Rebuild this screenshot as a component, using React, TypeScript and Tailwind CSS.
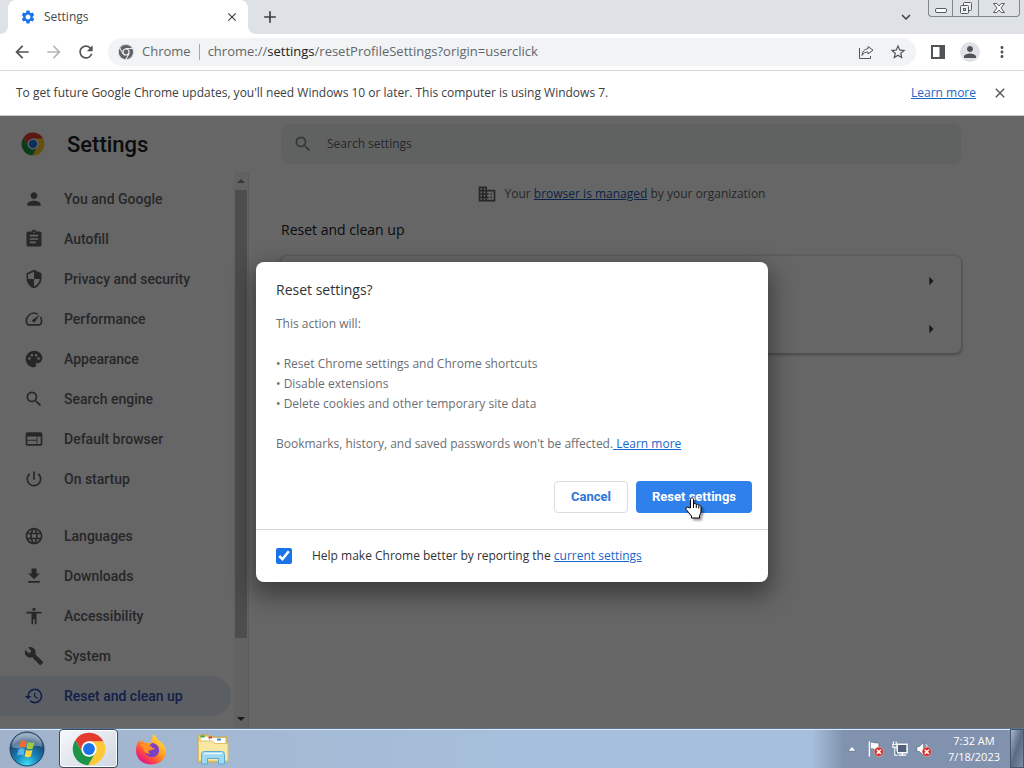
import * as React from "react";
import type { IconType } from "react-icons";
import {
  MdAccessibility,
  MdAdd,
  MdArrowBack,
  MdArrowForward,
  MdArrowRight,
  MdAssignment,
  MdBuild,
  MdClose,
  MdDomain,
  MdExpandMore,
  MdHistory,
  MdLanguage,
  MdMoreVert,
  MdPalette,
  MdPerson,
  MdPowerSettingsNew,
  MdRefresh,
  MdSearch,
  MdSecurity,
  MdSettings,
  MdSpeed,
  MdStarBorder,
  MdWeb,
} from "react-icons/md";
import { clsx } from "clsx";

type IconProps = { className?: string };

type NavItem = {
  label: string;
  icon: IconType | React.ComponentType<IconProps>;
  active?: boolean;
};

function DownloadIcon({ className }: Readonly<IconProps>) {
  return (
    <svg viewBox="0 0 24 24" fill="currentColor" className={className} aria-hidden="true">
      <path d="M19 9h-4V3H9v6H5l7 7 7-7zM5 18v2h14v-2H5z" />
    </svg>
  );
}

const primaryNav: NavItem[] = [
  { label: "You and Google", icon: MdPerson },
  { label: "Autofill", icon: MdAssignment },
  { label: "Privacy and security", icon: MdSecurity },
  { label: "Performance", icon: MdSpeed },
  { label: "Appearance", icon: MdPalette },
  { label: "Search engine", icon: MdSearch },
  { label: "Default browser", icon: MdWeb },
  { label: "On startup", icon: MdPowerSettingsNew },
];

const advancedNav: NavItem[] = [
  { label: "Languages", icon: MdLanguage },
  { label: "Downloads", icon: DownloadIcon },
  { label: "Accessibility", icon: MdAccessibility },
  { label: "System", icon: MdBuild },
  { label: "Reset and clean up", icon: MdHistory, active: true },
];

function ChromeLogo({ className, mono = false }: Readonly<IconProps & { mono?: boolean }>) {
  const stroke = mono ? { stroke: "#f1f3f4", strokeWidth: 2.5 } : {};
  return (
    <svg viewBox="1 1 46 46" className={className} aria-hidden="true">
      <path d="M5.54 12.03A22 22 0 0 1 43.6 14H24v10l-8.66 5z" fill={mono ? "#5f6368" : "#e33b2e"} {...stroke} />
      <path d="M43.6 14A22 22 0 0 1 22.86 45.97L32.66 29 24 24V14z" fill={mono ? "#5f6368" : "#fcc934"} {...stroke} />
      <path d="M22.86 45.97A22 22 0 0 1 5.54 12.03L15.34 29 24 24l8.66 5z" fill={mono ? "#5f6368" : "#1e9446"} {...stroke} />
      <circle cx="24" cy="24" r="10.4" fill={mono ? "#f1f3f4" : "#fff"} />
      <circle cx="24" cy="24" r={mono ? 7 : 8} fill={mono ? "#5f6368" : "#1a73e8"} />
    </svg>
  );
}

function WindowControls() {
  return (
    <div className="flex h-[17px] rounded-b border border-t-0 border-[#7d858f] text-[#555c66]">
      <button type="button" aria-label="Minimize" className="flex w-6 items-center justify-center border-r border-[#7d858f]">
        <svg viewBox="0 0 14 14" className="size-3.5" fill="#fff" stroke="currentColor">
          <rect x="1.5" y="7.5" width="11" height="4" rx="1.5" />
        </svg>
      </button>
      <button type="button" aria-label="Restore" className="flex w-[26px] items-center justify-center border-r border-[#7d858f]">
        <svg viewBox="0 0 14 14" className="size-3.5" fill="#eef0f3" stroke="currentColor">
          <rect x="4.5" y="1.5" width="8" height="8" rx="1" />
          <rect x="1.5" y="4.5" width="8" height="8" rx="1" />
          <rect x="4.5" y="7.5" width="2" height="2" />
        </svg>
      </button>
      <button type="button" aria-label="Close" className="flex w-10 items-center justify-center">
        <svg viewBox="0 0 14 12" className="h-3 w-3.5" fill="#fff" stroke="currentColor" strokeLinejoin="round">
          <path d="M1.5 1.5h3.3L7 4l2.2-2.5h3.3L9 6l3.5 4.5H9.2L7 8l-2.2 2.5H1.5L5 6z" />
        </svg>
      </button>
    </div>
  );
}

function TabStrip() {
  return (
    <div className="flex h-[34px] shrink-0 bg-white">
      <div className="w-2 rounded-br-lg bg-[#dee1e6]" />
      <div className="w-60 bg-[#dee1e6]">
        <div className="flex h-full items-center rounded-t-lg bg-white pr-2 pl-3">
          <MdSettings className="size-4 text-[#1a73e8]" />
          <span className="ml-2 flex-1 text-xs text-[#45494d]">Settings</span>
          <button type="button" aria-label="Close tab" className="flex size-4 items-center justify-center">
            <MdClose className="size-3.5 text-[#3c4043]" />
          </button>
        </div>
      </div>
      <div className="flex flex-1 items-start rounded-bl-lg bg-[#dee1e6] pr-1">
        <button type="button" aria-label="New tab" className="ml-3 flex h-[34px] w-5 items-center justify-center">
          <MdAdd className="size-5 text-[#3c4043]" />
        </button>
        <button type="button" aria-label="Search tabs" className="mr-3 ml-auto flex h-[34px] w-5 items-center justify-center">
          <MdExpandMore className="size-[18px] text-[#3c4043]" />
        </button>
        <WindowControls />
      </div>
    </div>
  );
}

function ToolbarButton({ label, children }: Readonly<{ label: string; children: React.ReactNode }>) {
  return (
    <button type="button" aria-label={label} className="flex h-7 w-8 shrink-0 items-center justify-center text-[#505357]">
      {children}
    </button>
  );
}

function Toolbar() {
  return (
    <div className="flex h-[37px] shrink-0 items-center border-b border-[#d5d7da] bg-white px-1.5">
      <ToolbarButton label="Back">
        <MdArrowBack className="size-5" />
      </ToolbarButton>
      <ToolbarButton label="Forward">
        <MdArrowForward className="size-5 text-[#b5b7ba]" />
      </ToolbarButton>
      <ToolbarButton label="Reload">
        <MdRefresh className="size-5" />
      </ToolbarButton>
      <div className="mx-1.5 flex h-7 flex-1 items-center rounded-full bg-[#f1f3f4] pl-2.5 text-[13px] text-[#63676b]">
        <ChromeLogo mono className="size-4" />
        <span className="ml-2">Chrome</span>
        <span className="mx-2 h-4 w-px bg-[#a5a8ab]" />
        <span className="flex-1">
          chrome://<span className="text-[#202124]">settings</span>/resetProfileSettings?origin=userclick
        </span>
        <ToolbarButton label="Share this page">
          <svg viewBox="0 0 16 16" className="size-4" fill="none" stroke="currentColor" strokeLinejoin="round">
            <path d="M1.500 4v10.500h11V12" />
            <path d="M10 2.500l5 3.700-5 3.800V8C7.200 8 5.200 9 4 11.500 4.200 7.500 6.500 5 10 4.700z" />
          </svg>
        </ToolbarButton>
        <ToolbarButton label="Bookmark this tab">
          <MdStarBorder className="size-[18px]" />
        </ToolbarButton>
        <span className="w-0.5" />
      </div>
      <ToolbarButton label="Side panel">
        <svg viewBox="0 0 14 14" className="size-3.5">
          <rect x="1" y="1" width="12" height="12" fill="none" stroke="currentColor" strokeWidth="2" />
          <rect x="8.500" y="1" width="5" height="12" fill="currentColor" />
        </svg>
      </ToolbarButton>
      <ToolbarButton label="Profile">
        <span className="flex size-5 items-center justify-center rounded-full bg-[#dee1e6]">
          <MdPerson className="size-[18px]" />
        </span>
      </ToolbarButton>
      <ToolbarButton label="Menu">
        <MdMoreVert className="size-[18px]" />
      </ToolbarButton>
    </div>
  );
}

function InfoBar() {
  return (
    <div className="flex h-[45px] shrink-0 items-center border-b border-[#c4c6c9] bg-white px-4 text-xs text-[#3c4043]">
      <p className="flex-1">
        To get future Google Chrome updates, you'll need Windows 10 or later. This computer is using Windows 7.
      </p>
      <a href="#update" className="text-[#1a66c9] underline">
        Learn more
      </a>
      <button type="button" aria-label="Dismiss" className="ml-4 flex size-4 items-center justify-center">
        <MdClose className="size-4 shrink-0 text-[#505357]" />
      </button>
    </div>
  );
}

function NavLink({ label, icon: Icon, active = false }: Readonly<NavItem>) {
  return (
    <a
      href="#nav"
      aria-current={active ? "page" : undefined}
      className={clsx(
        "mr-[3px] flex h-10 items-center rounded-r-full pl-6 font-[Roboto,sans-serif] text-sm font-medium",
        active ? "bg-[#e4ebf8] text-[#3050b8]" : "text-[#5f6368]",
      )}
    >
      <Icon className="mr-5 size-5" />
      {label}
    </a>
  );
}

function Sidebar() {
  return (
    <aside className="flex w-[249px] shrink-0 flex-col">
      <div className="flex h-14 shrink-0 items-center pl-[21px]">
        <ChromeLogo className="size-6" />
        <h1 className="ml-[22px] font-[Roboto,sans-serif] text-[22px] font-medium text-[#202124]">Settings</h1>
      </div>
      <div className="flex min-h-0 flex-1 border-r border-[#e8e8e8]">
        <nav className="min-w-0 flex-1 overflow-hidden pt-[7px]">
          {primaryNav.map((item) => (
            <NavLink key={item.label} {...item} />
          ))}
          <div className="h-[17px]" />
          {advancedNav.map((item) => (
            <NavLink key={item.label} {...item} />
          ))}
        </nav>
        {/* Scrollbar */}
        <div className="flex w-3.5 flex-col items-center bg-[#f5f5f5]">
          <svg viewBox="0 0 8 4" className="my-[7px] h-1 w-2" fill="#8a8a8a">
            <path d="M4 0l4 4H0z" />
          </svg>
          <div className="w-3 flex-[449] bg-[#c1c1c1]" />
          <div className="flex-[72]" />
          <svg viewBox="0 0 8 4" className="my-[7px] h-1 w-2" fill="#404040">
            <path d="M0 0h8L4 4z" />
          </svg>
        </div>
      </div>
    </aside>
  );
}

function SettingsPage() {
  return (
    <main className="flex min-w-0 flex-1 flex-col pr-[63px] pl-8">
      <label className="mt-2 flex h-10 items-center rounded-lg bg-[#f1f4f3] pl-3">
        <MdSearch className="size-5 text-[#7f868b]" />
        <input
          type="search"
          placeholder="Search settings"
          className="ml-3.5 flex-1 bg-transparent text-xs outline-none placeholder:text-[#5f6368]"
        />
      </label>
      <div className="mt-5 flex h-5 items-center justify-center text-xs text-[#5f6368]">
        <MdDomain className="mr-2 size-5" />
        <p>
          Your{" "}
          <a href="#managed" className="text-[#1a5bb8] underline">
            browser is managed
          </a>{" "}
          by your organization
        </p>
      </div>
      <h2 className="mt-3 text-sm leading-7 text-[#202124]">Reset and clean up</h2>
      <div className="mt-3 rounded-md shadow-[0_1px_3px_1px_#3c404366]">
        <button
          type="button"
          aria-label="Restore settings to their original defaults"
          className="flex h-[49px] w-full items-center justify-end pr-5"
        >
          <MdArrowRight className="size-5 text-[#3c4043]" />
        </button>
        <button type="button" aria-label="Clean up computer" className="flex h-12 w-full items-center justify-end pr-5">
          <MdArrowRight className="size-5 text-[#3c4043]" />
        </button>
      </div>
    </main>
  );
}

function HandCursor({ className }: Readonly<IconProps>) {
  return (
    <svg viewBox="0 0 17 22" className={className} aria-hidden="true">
      <path
        d="M5.500 11V2.500C5.500.200 8.500.200 8.500 2.500V7c.8-.8 2.400-.6 2.700.6.900-.7 2.300-.300 2.500.900 1-.5 2.300.100 2.300 1.500v4c0 2-1 3-1.500 4.500V21h-8v-2C5 17 3 15 1.200 12.500.2 11 1.800 9.500 3.200 10.400z"
        fill="#fff"
        stroke="#000"
        strokeLinejoin="round"
      />
      <path d="M8.500 7v4M11.300 8v3M13.800 9v2.500" stroke="#000" fill="none" />
    </svg>
  );
}

function ResetDialog() {
  return (
    <div
      role="dialog"
      aria-modal="true"
      aria-labelledby="reset-title"
      className="w-lg rounded-lg bg-white shadow-[0_10px_24px_4px_#00000066]"
    >
      <div className="px-5 pt-4 text-xs leading-5 text-[#6b6e72]">
        <h2 id="reset-title" className="text-sm leading-6 text-[#303236]">
          Reset settings?
        </h2>
        <p className="mt-3">This action will:</p>
        <ul className="my-5">
          <li>• Reset Chrome settings and Chrome shortcuts</li>
          <li>• Disable extensions</li>
          <li>• Delete cookies and other temporary site data</li>
        </ul>
        <p>
          Bookmarks, history, and saved passwords won't be affected.
          <a href="#learn" className="text-[#1a66c9] underline">
            {" "}
            Learn more
          </a>
        </p>
      </div>
      <div className="flex justify-end gap-2 px-4 pt-[27px] pb-4 font-[Roboto,sans-serif] text-[13px] font-bold">
        <button type="button" className="h-8 rounded border border-[#dadce0] px-4 text-[#2b76d9]">
          Cancel
        </button>
        <button type="button" className="relative h-8 rounded bg-[#2f80ea] px-4 text-white">
          Reset settings
          <HandCursor className="absolute top-4 left-[49px] h-[22px] w-[17px] drop-shadow-[2px_2px_1px_#00000066]" />
        </button>
      </div>
      <div className="flex h-[53px] items-center border-t border-[#d5d5d5] px-5 text-xs text-[#303236]">
        <input id="send-report" type="checkbox" defaultChecked className="size-4 accent-[#1a73e8]" />
        <label htmlFor="send-report" className="ml-5">
          Help make Chrome better by reporting the{" "}
          <a href="#current" className="text-[#1a66c9] underline">
            current settings
          </a>
        </label>
      </div>
    </div>
  );
}

function StartOrb() {
  return (
    <svg viewBox="0 0 36 36" className="size-9" aria-hidden="true">
      <defs>
        <radialGradient id="orb" cx="50%" cy="95%" r="85%">
          <stop offset="0" stopColor="#3fe0f5" />
          <stop offset="0.4" stopColor="#1684b8" />
          <stop offset="0.8" stopColor="#1c4a78" />
          <stop offset="1" stopColor="#6f8ba8" />
        </radialGradient>
      </defs>
      <circle cx="18" cy="18" r="17" fill="url(#orb)" stroke="#20405f" />
      <path d="M3 16a15 14 0 0 1 30 0c-9-4-20 4-30 0z" fill="#fff" opacity="0.3" />
      <path d="M11.500 10.500c2-1.400 4.300-1.300 6.200-.2l-1.500 6.500c-2-1.200-4.200-1.200-6.300.1z" fill="#ee6a2c" />
      <path d="M18.900 10.900c2 1.200 4.300 1.200 6.500 0l-1.600 6.600c-2 1.200-4.300 1.100-6.400-.1z" fill="#9dcc3f" />
      <path d="M9.600 18.200c2-1.300 4.300-1.300 6.300-.1l-1.600 6.600c-2-1.200-4.200-1.200-6.300.1z" fill="#5bb3ec" />
      <path d="M17.100 18.700c2 1.200 4.300 1.200 6.400 0l-1.600 6.600c-2 1.200-4.200 1.100-6.300-.1z" fill="#fcd440" />
    </svg>
  );
}

function FirefoxLogo() {
  return (
    <svg viewBox="0 0 32 32" className="size-8" aria-hidden="true">
      <defs>
        <linearGradient id="fox" x1="0.85" y1="0.1" x2="0.2" y2="0.9">
          <stop offset="0" stopColor="#ffe14a" />
          <stop offset="0.45" stopColor="#ff9a1f" />
          <stop offset="0.75" stopColor="#ff4a3d" />
          <stop offset="1" stopColor="#e31587" />
        </linearGradient>
      </defs>
      <path
        d="M18 1c2.500 1.500 4 3.500 4.700 6C27 9 30.500 13 31 18c0 8-6.500 13.500-14.800 13.500C7.500 31.500 1 25.500 1 17.500c0-4 1-7.500 3.500-10.500l.500 3c.800-1.300 1.800-2.300 3-3 .300 1.600 1 2.600 2 3 2-.500 4-.300 5.800.300C17 8 17.200 4 18 1z"
        fill="url(#fox)"
      />
      <path d="M17 10c5 .5 7.500 4 7 8-.500 4.300-4 6.500-8 6-4-.5-6.500-3.500-6-7 1.500 1.500 3.500 1.800 5.500.500 1.500-1.200 3.500-.500 4.500-2-1-.300-3-.700-4.500-.500-1.500-2-.500-4 1.500-5z" fill="#7b3fc4" />
      <path d="M4.500 12c3-2 6-1.500 8.500 1 2 .2 3.500.300 4.500 1-.8 1.500-2.300 2-4 2.500-1 2 .5 4 2.500 4-4 1-7-1-7.500-4.500C8 14 6.500 12.500 4.500 12z" fill="#ff9125" />
    </svg>
  );
}

function ExplorerIcon() {
  return (
    <svg viewBox="0 0 34 32" className="h-8 w-[34px]" aria-hidden="true">
      <path d="M2 4l1-2h10l1.500 2H31v25H2z" fill="#e9cf78" stroke="#c8a94e" />
      <path d="M5 4h8v4H5zM14 5h15v5H14z" fill="#fff" />
      <path d="M4.500 2.500h4v2h-4z" fill="#2fa84a" />
      <path d="M12.500 3.500h3.500v2h-3.500z" fill="#d9402e" />
      <path d="M21 5.500h4v2h-4z" fill="#2f8be0" />
      <path d="M2.500 8h14l2 2.500h13.500V28H2.500z" fill="#f8e8a4" stroke="#dcc06a" />
      <path d="M5.500 31v-9.500c0-2 1-3 3-3h17c2 0 3 1 3 3V31h-6v-5.500h-11V31z" fill="#9fd8f3" stroke="#5aaad6" />
      <path d="M8 20.500h18" stroke="#e7f8ff" strokeWidth="1.5" />
    </svg>
  );
}

function ErrorBadge() {
  return (
    <g>
      <circle cx="11.500" cy="12" r="5" fill="#d3322b" stroke="#f3c5c2" strokeWidth="0.6" />
      <path d="M9.300 9.800l4.400 4.400M13.700 9.800l-4.400 4.400" stroke="#fff" strokeWidth="1.600" />
    </g>
  );
}

function Taskbar() {
  return (
    <footer className="flex h-10 shrink-0 items-center border-t border-[#5b7590] bg-linear-to-r from-[#a1b3cb] via-[#a6bfdc] via-50% to-[#a6bfdc] inset-shadow-[0_1px_0_#dfe9f3]">
      <button type="button" aria-label="Start" className="mr-3.5 ml-[9px]">
        <StartOrb />
      </button>
      <button
        type="button"
        aria-label="Google Chrome"
        className="flex h-full w-[59px] items-center justify-center rounded-sm border border-[#3e4a5a] bg-linear-to-br from-[#f6f8fb] to-[#cfd6e2] inset-ring inset-ring-white"
      >
        <ChromeLogo className="size-[34px]" />
      </button>
      <button type="button" aria-label="Firefox" className="flex h-full w-[65px] items-center justify-center">
        <FirefoxLogo />
      </button>
      <button type="button" aria-label="Windows Explorer" className="flex h-full w-[60px] items-center justify-center">
        <ExplorerIcon />
      </button>
      <div className="ml-auto flex h-full items-center bg-linear-to-r from-transparent to-[#8092ae] to-15% pl-8 inset-shadow-[0_1px_0_#dfe9f3]">
        <button type="button" aria-label="Show hidden icons" className="mr-2 flex size-4 items-center justify-center">
          <svg viewBox="0 0 10 6" className="h-1.5 w-2.5" fill="#fff" stroke="#55657d" strokeWidth="0.5">
            <path d="M5 .5l4 4.500H1z" />
          </svg>
        </button>
        <div className="flex gap-2">
          <svg viewBox="0 0 17 18" className="h-[18px] w-4" aria-hidden="true">
            <path d="M1.500 1v16" stroke="#fff" strokeWidth="1.500" />
            <path d="M2.500 2c3-1 5 1.500 9 .5v7c-4 1-6-1.500-9-.5z" fill="#fff" stroke="#444f5f" strokeWidth="0.5" />
            <ErrorBadge />
          </svg>
          <svg viewBox="0 0 17 18" className="h-[18px] w-4" aria-hidden="true">
            <rect x="5.500" y="4" width="10.500" height="9" fill="#51617a" stroke="#fff" strokeWidth="1.500" />
            <path d="M7 15.500h8M11 13v2" stroke="#fff" strokeWidth="1.500" />
            <path d="M1.500 1v3M4.500 1v3M0.800 4.500h4.500V7H.8zM3 7v8.500h3" stroke="#fff" strokeWidth="1.200" fill="#51617a" />
          </svg>
          <svg viewBox="0 0 17 18" className="h-[18px] w-4" aria-hidden="true">
            <path d="M1 6.500h2.500L8 2v14l-4.500-4.500H1z" fill="#fff" stroke="#444f5f" strokeWidth="0.5" />
            <path d="M10.500 4c1 1 1.200 2 1.200 3" stroke="#fff" fill="none" />
            <ErrorBadge />
          </svg>
        </div>
        <div className="mr-2.5 ml-4 text-center text-[11px] leading-4 text-white">
          <p>7:32 AM</p>
          <p>7/18/2023</p>
        </div>
        <button
          type="button"
          aria-label="Show desktop"
          className="h-full w-3.5 border border-[#46566e] bg-linear-to-br from-[#a9b6c8] via-[#5b6b84] to-[#7c8ca5]"
        />
      </div>
    </footer>
  );
}

function App(): React.JSX.Element {
  return (
    <div className="flex h-screen flex-col overflow-hidden font-['Open_Sans',sans-serif]">
      <TabStrip />
      <Toolbar />
      <InfoBar />
      <div className="relative flex min-h-0 flex-1 bg-white">
        <Sidebar />
        <SettingsPage />
        <div className="absolute inset-0 flex items-center justify-center bg-black/60">
          <ResetDialog />
        </div>
      </div>
      <Taskbar />
    </div>
  );
}

export default App;
